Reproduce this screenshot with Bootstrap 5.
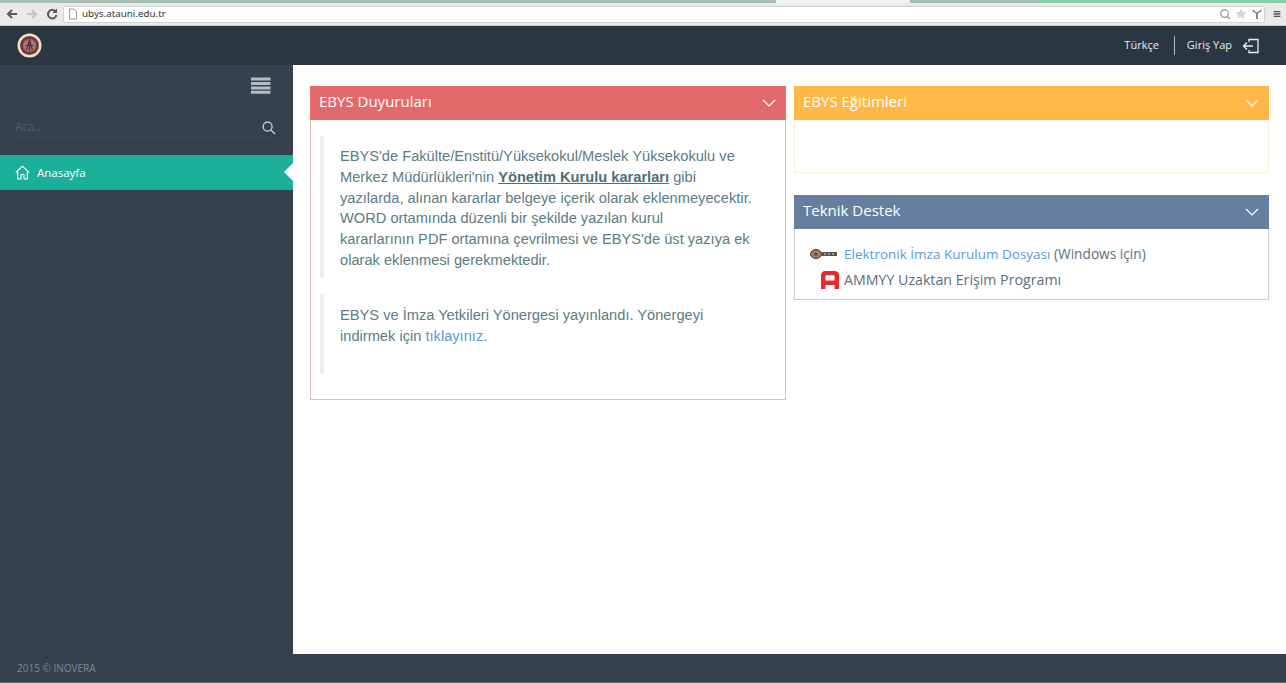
<!DOCTYPE html>
<html lang="tr">
<head>
  <meta charset="UTF-8">
  <meta name="viewport" content="width=device-width, initial-scale=1.0">
  <title>EBYS</title>
  <link href="https://cdn.jsdelivr.net/npm/bootstrap@5.3.3/dist/css/bootstrap.min.css" rel="stylesheet">
  <style>
    html, body { height: 100%; }
    body { font-family: "Open Sans", sans-serif; background: #364150; overflow: hidden; }
    .page-shell { width: 1286px; height: 683px; }
    .tab-strip { height: 3px; }
    .tab-old { width: 776px; background: #a9bdb4; }
    .tab-now { width: 134px; background: #f1f1f1; }
    .tab-next { width: 128px; background: #a9bdb4; }
    .tab-green { flex: 1; background: #86cdaa; }
    .chrome-bar { height: 23px; background: #eaeaea; border-bottom: 1px solid #c9c9c9; padding: 0 5px 0 6px; gap: 8px; }
    .chrome-nav { width: 12px; height: 14px; flex: none; }
    .url-box { height: 17px; width: 1202px; flex: none; background: #fff; border: 1px solid #d2d2d2; border-radius: 2px; margin-left: -3px; padding: 0 1px 0 4px; font-family: "Noto Sans", sans-serif; font-size: 9.8px; color: #333; }
    .top-head { height: 39px; background: #2b3643; padding: 0 26px 0 17px; color: #e8ecef; font-size: 11px; }
    .crest { width: 25px; height: 25px; }
    .lang-sep { width: 1px; height: 19px; background: #b5bcc4; margin: 0 12px 0 15px; }
    .login-icon { margin-left: 10px; }
    .main-row { height: 589px; }
    .side-col { width: 293px; flex: none; background: #364150; }
    .side-toggle { height: 43px; padding: 12px 22px 0 0; }
    .side-search { margin: 0 17px 0 15px; height: 30px; padding-top: 8px; border-bottom: 1px solid #3e4b5b; color: #4c5a6b; font-size: 12px; }
    .search-icon { margin-top: 2px; }
    .side-link { margin-top: 17px; height: 35px; background: #1caf9a; color: #fff; font-size: 11.5px; padding-left: 15px; position: relative; gap: 7px; }
    .side-link::after { content: ""; position: absolute; right: 0; top: 8px; border: 9px solid transparent; border-right-color: #fff; border-left-width: 0; }
    .content-col { background: #fff; padding: 21px 0 0 17px; gap: 8px; }
    .box-col { width: 476px; flex: none; }
    .box-wide { width: 475px; flex: none; }
    .panel-box { border: 1px solid; }
    .panel-head { height: 34px; margin: -1px -1px 0; padding: 0 10px 0 9px; color: #fff; font-size: 15px; }
    .panel-head span { margin-top: -3px; }
    .tone-red { border-color: #eeb9ba; }
    .tone-red .panel-head { background: #e36a6c; }
    .tone-amber { border-color: #fbeed9; margin-bottom: 22px; }
    .tone-amber .panel-head { background: #ffb848; }
    .tone-steel { border-color: #c5ccd6; }
    .tone-steel .panel-head { background: #667fa0; }
    .red-body { height: 279px; padding: 16px 10px 0 9px; }
    .quote-block { border-left: 4px solid #eeeeee; padding: 10px 15px 6px 16px; margin: 0; font-family: "Liberation Sans", Arial, sans-serif; font-size: 14.65px; line-height: 20.8px; color: #5a7c84; }
    .quote-one { height: 142px; margin-bottom: 16px; }
    .quote-two { height: 80px; padding-top: 11px; }
    .quote-block a { color: #5b9bd1; text-decoration: none; }
    .quote-block b { text-decoration: underline; color: #4d7079; }
    .amber-body { height: 52px; }
    .steel-body { height: 70px; padding: 12px 0 0 15px; font-size: 13.7px; color: #5b6f7d; line-height: 25px; }
    .steel-body a { color: #5b9bd1; text-decoration: none; font-size: 13.5px; }
    .ammyy-row { font-size: 14.2px; }
    .tool-icon { width: 30px; flex: none; margin-right: 4px; }
    .foot-bar { height: 29px; background: #364150; border-bottom: 1px solid #3f7f78; padding-left: 17px; color: #7a8797; font-size: 10px; }
  </style>
</head>
<body>
<div class="page-shell d-flex flex-column">
  <div class="tab-strip d-flex">
    <div class="tab-old"></div><div class="tab-now"></div><div class="tab-next"></div><div class="tab-green"></div>
  </div>
  <div class="chrome-bar d-flex align-items-center">
    <svg class="chrome-nav" viewBox="0 0 12 14"><path d="M11 7H3M6 3 2 7l4 4" fill="none" stroke="#5a5a5a" stroke-width="2"/></svg>
    <svg class="chrome-nav" viewBox="0 0 12 14"><path d="M1 7h8M6 3l4 4-4 4" fill="none" stroke="#c4c4c4" stroke-width="2"/></svg>
    <svg class="chrome-nav" viewBox="0 0 12 14"><path d="M10 5a4.300 4.300 0 1 0 .5 3" fill="none" stroke="#5a5a5a" stroke-width="2"/><path d="M11 1.500v4.500H6.500z" fill="#5a5a5a"/></svg>
    <div class="url-box d-flex align-items-center">
      <svg width="10" height="12" viewBox="0 0 10 12" class="me-1"><path d="M1.500 1h4.500l2.500 2.500V11h-7z" fill="#fff" stroke="#999"/></svg>
      <span>ubys.atauni.edu.tr</span>
      <svg class="ms-auto" width="12" height="12" viewBox="0 0 12 12"><circle cx="5.500" cy="5.500" r="3.800" fill="none" stroke="#9a9a9a" stroke-width="1.300"/><path d="m8.500 8.500 2.500 2.500" stroke="#9a9a9a" stroke-width="1.500"/></svg>
      <svg class="ms-1" width="12" height="12" viewBox="0 0 12 12"><path d="m6 .5 1.700 3.600 3.800.5-2.800 2.600.7 3.900L6 8.800l-3.400 1.900.7-3.900L.5 4.600l3.800-.5z" fill="#d4d4d4"/></svg>
      <svg class="ms-1" width="12" height="12" viewBox="0 0 12 12"><path d="M1.500 1.500v2l3.500 2v5.500h2V5.500l3.500-2v-2l-2 .8v1L6 4 3.500 3.300v-1z" fill="#8a8a8a"/></svg>
    </div>
    <svg width="12" height="12" viewBox="0 0 12 12" class="ms-auto"><path d="M1 2.500h10M1 6h10M1 9.500h10" stroke="#555" stroke-width="2"/></svg>
  </div>

  <header class="top-head d-flex align-items-center">
    <svg class="crest" viewBox="0 0 25 25">
      <circle cx="12.500" cy="12.500" r="12" fill="#efe2c8"/>
      <circle cx="12.500" cy="12.500" r="9.500" fill="#6d3a40"/>
      <circle cx="12.500" cy="12.500" r="6.500" fill="#a5797c"/>
      <path d="M12.500 6.500v12M9.500 17l3-10 3 10M8.500 12.500h8" fill="none" stroke="#5c2c30" stroke-width="1.200"/>
    </svg>
    <span class="ms-auto">Türkçe</span>
    <span class="lang-sep"></span>
    <span>Giriş Yap</span>
    <svg class="login-icon" width="18" height="18" viewBox="0 0 18 18"><path d="M7 5V2.500h9v13H7V13" fill="none" stroke="#e8ecef" stroke-width="1.300"/><path d="M11 9H1.500M5 5.500 1.500 9 5 12.500" fill="none" stroke="#e8ecef" stroke-width="1.300"/></svg>
  </header>

  <div class="main-row d-flex">
    <aside class="side-col">
      <div class="side-toggle d-flex justify-content-end">
        <svg width="20" height="18" viewBox="0 0 20 18"><path d="M0 2h19.500M0 6.500h19.500M0 11h19.500M0 15.300h19.500" stroke="#b4bcc8" stroke-width="3"/></svg>
      </div>
      <div class="side-search d-flex align-items-center justify-content-between">
        <span>Ara...</span>
        <svg class="search-icon" width="14" height="14" viewBox="0 0 15 15"><circle cx="6" cy="6" r="4.800" fill="none" stroke="#d5dbe2" stroke-width="1.300"/><path d="m9.500 9.500 4.500 4.500" stroke="#d5dbe2" stroke-width="1.400"/></svg>
      </div>
      <div class="side-link d-flex align-items-center">
        <svg width="15" height="15" viewBox="0 0 15 15"><path d="M.8 7.500 7.500 1.200l6.700 6.300M2.700 6.500v7.500h3.300V9.500h3v4.500h3.300V6.500" fill="none" stroke="#fff" stroke-width="1.100"/></svg>
        <span>Anasayfa</span>
      </div>
    </aside>

    <main class="content-col flex-grow-1 d-flex align-items-start">
      <section class="box-col panel-box tone-red">
        <div class="panel-head d-flex align-items-center justify-content-between">
          <span>EBYS Duyuruları</span>
          <svg width="14" height="8" viewBox="0 0 14 8"><path d="m1 1 6 6 6-6" fill="none" stroke="#fff" stroke-width="1.200"/></svg>
        </div>
        <div class="red-body">
          <blockquote class="quote-block quote-one">EBYS'de Fakülte/Enstitü/Yüksekokul/Meslek Yüksekokulu ve Merkez Müdürlükleri'nin <b>Yönetim Kurulu kararları</b> gibi yazılarda, alınan kararlar belgeye içerik olarak eklenmeyecektir. WORD ortamında düzenli bir şekilde yazılan kurul<br>kararlarının PDF ortamına çevrilmesi ve EBYS'de üst yazıya ek olarak eklenmesi gerekmektedir.</blockquote>
          <blockquote class="quote-block quote-two">EBYS ve İmza Yetkileri Yönergesi yayınlandı. Yönergeyi indirmek için <a href="#">tıklayınız.</a></blockquote>
        </div>
      </section>

      <div class="box-wide d-flex flex-column">
        <section class="panel-box tone-amber">
          <div class="panel-head d-flex align-items-center justify-content-between">
            <span>EBYS Eğitimleri</span>
            <svg width="14" height="8" viewBox="0 0 14 8"><path d="m1 1 6 6 6-6" fill="none" stroke="#fff" stroke-width="1.200"/></svg>
          </div>
          <div class="amber-body"></div>
        </section>
        <section class="panel-box tone-steel">
          <div class="panel-head d-flex align-items-center justify-content-between">
            <span>Teknik Destek</span>
            <svg width="14" height="8" viewBox="0 0 14 8"><path d="m1 1 6 6 6-6" fill="none" stroke="#fff" stroke-width="1.200"/></svg>
          </div>
          <div class="steel-body">
            <div class="d-flex align-items-center">
              <svg class="tool-icon" width="30" height="10" viewBox="0 0 30 10"><ellipse cx="6" cy="5" rx="5.500" ry="4.500" fill="#a87a5c" stroke="#4a3a30"/><circle cx="6" cy="5" r="1.500" fill="#5a4035"/><rect x="11" y="3" width="16" height="4" fill="#5a5148"/><path d="M14 5h2M18 5h2M22 5h2" stroke="#ddd"/></svg>
              <span><a href="#">Elektronik İmza Kurulum Dosyası</a> (Windows için)</span>
            </div>
            <div class="ammyy-row d-flex align-items-center">
              <svg class="tool-icon" width="30" height="19" viewBox="0 0 30 19"><path d="M11 19V5.500Q11 1 15.500 1h9q4.500 0 4.500 4.500V19h-4.500v-4h-9v4zM15.500 10.500h9V6q0-.8-.8-.8h-7.400q-.8 0-.8.800z" fill="#e42b30" fill-rule="evenodd"/></svg>
              <span>AMMYY Uzaktan Erişim Programı</span>
            </div>
          </div>
        </section>
      </div>
    </main>
  </div>

  <footer class="foot-bar d-flex align-items-center">2015 © INOVERA</footer>
</div>
<script src="https://cdn.jsdelivr.net/npm/bootstrap@5.3.3/dist/js/bootstrap.bundle.min.js"></script>
</body>
</html>
